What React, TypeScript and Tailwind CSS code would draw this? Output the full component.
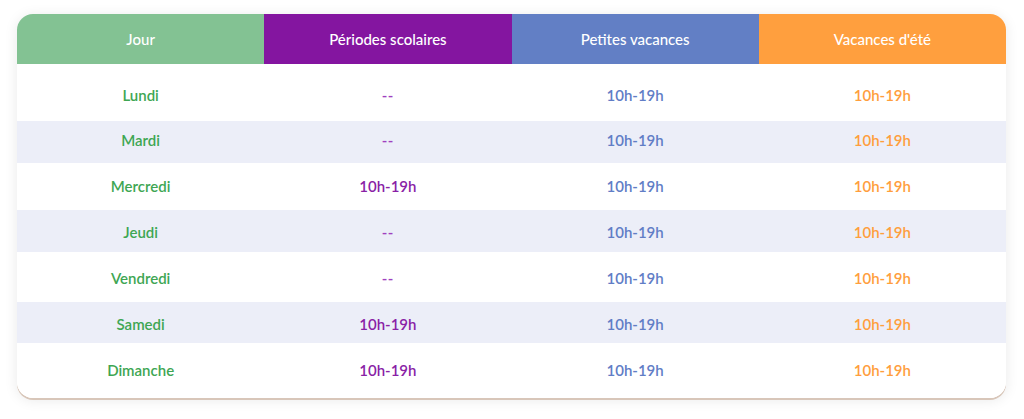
const days = [
  { day: 'Lundi', school: '--', h: 'h-[57px] pt-[5px]' },
  { day: 'Mardi', school: '--', h: 'h-[42px] pb-[4px]' },
  { day: 'Mercredi', school: '10h-19h', h: 'h-[47px]' },
  { day: 'Jeudi', school: '--', h: 'h-[42px] pt-[2px]' },
  { day: 'Vendredi', school: '--', h: 'h-[50px] pt-[2px]' },
  { day: 'Samedi', school: '10h-19h', h: 'h-[41px] pt-[3px]' },
  { day: 'Dimanche', school: '10h-19h', h: 'h-[55px]' },
];

export default function App() {
  return (
    <div
      className="min-h-screen bg-white pl-[17px] pt-[14px]"
      style={{ fontFamily: 'Lato, "Noto Sans", sans-serif' }}
    >
      <div className="w-[989px] overflow-hidden rounded-[16px] bg-white shadow-[0_2px_0_#d8c6b9,0_2px_14px_rgba(0,0,0,0.09)]">
        <div className="grid h-[50px] grid-cols-4 text-[15px] font-medium text-white">
          <div className="flex items-center justify-center bg-[#83c293] pt-px">Jour</div>
          <div className="flex items-center justify-center bg-[#8415a0] pt-px">Périodes scolaires</div>
          <div className="flex items-center justify-center bg-[#627fc5] pt-px">Petites vacances</div>
          <div className="flex items-center justify-center bg-[#ff9f3e] pt-px">Vacances d'été</div>
        </div>
        {days.map((r, i) => (
          <div
            key={r.day}
            className={`grid grid-cols-4 text-[15px] font-semibold ${r.h} ${i % 2 === 1 ? 'bg-[#eceef8]' : 'bg-white'}`}
          >
            <div className="flex items-center justify-center text-[#3ea653]">{r.day}</div>
            <div
              className={`flex items-center justify-center ${r.school === '--' ? 'tracking-[0.5px] text-[#a040c0]' : 'text-[#8a1fa6]'}`}
            >
              {r.school}
            </div>
            <div className="flex items-center justify-center text-[#617dc6]">10h-19h</div>
            <div className="flex items-center justify-center text-[#ff9e3c]">10h-19h</div>
          </div>
        ))}
      </div>
    </div>
  );
}
